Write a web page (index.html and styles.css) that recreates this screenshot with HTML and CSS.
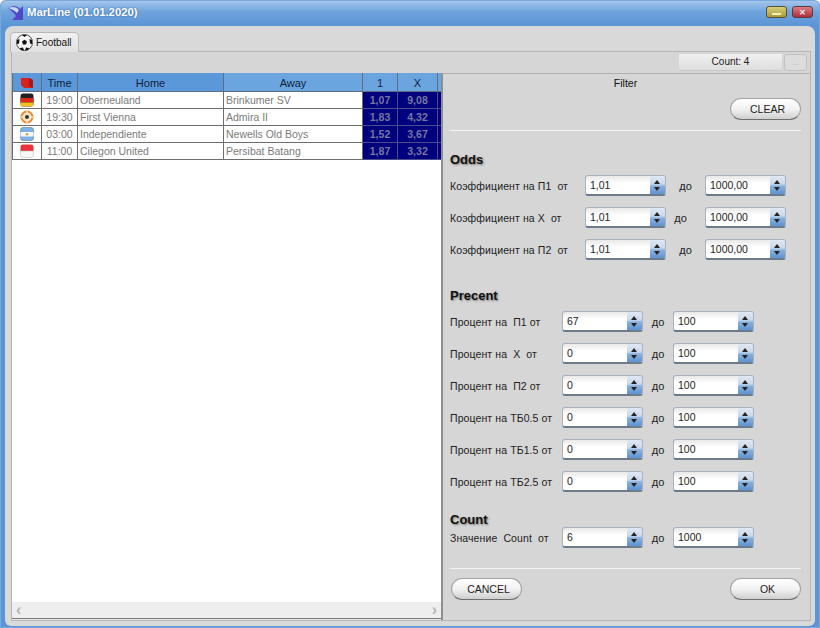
FILE: index.html
```html
<!DOCTYPE html>
<html lang="en">
<head>
    <meta charset="UTF-8">
    <title>MarLine (01.01.2020)</title>
    <link rel="stylesheet" href="styles.css">
</head>
<body>
<div class="window">
    <!-- Title bar -->
    <div class="titlebar">
        <svg class="app-icon" width="16" height="18" viewBox="0 0 16 18">
            <path d="M0 5 C5 2 10 3 12 6 L15 3 L15 17 L4 17 L8 13 C6 10 3 7 0 5 Z" fill="#4f46c8"/>
            <path d="M0 5 C5 3 9 4 11 7 L9 10 C7 8 4 6 0 5 Z" fill="#c4d8f6"/>
        </svg>
        <div class="app-title">MarLine (01.01.2020)</div>
        <div class="win-btn win-min"><span></span></div>
        <div class="win-btn win-close">✕</div>
    </div>

    <div class="client">
        <!-- Tabs -->
        <div class="tabs">
            <div class="tab">
                <svg width="17" height="17" viewBox="0 0 17 17">
                    <circle cx="8.5" cy="8.5" r="8" fill="#f4f4f4" stroke="#222" stroke-width="0.8"/>
                    <path d="M8.5 5.8 L11 7.6 L10 10.6 L7 10.6 L6 7.6 Z" fill="#111"/>
                    <path d="M6 1 L11 1 L8.5 3 Z M1 6 L3.5 5 L3 9.5 L1 10 Z M16 6 L13.5 5 L14 9.5 L16 10 Z M4 14 L7 13.5 L8 16.5 L5 16 Z M13 14 L10 13.5 L9 16.5 L12 16 Z" fill="#111"/>
                </svg>
                <span>Football</span>
            </div>
        </div>

        <div class="pane">
            <div class="toolbar">
                <div class="count-box">Count: 4</div>
                <div class="more-btn">...</div>
            </div>

            <div class="main">
                <!-- Match table -->
                <div class="table-wrap">
                    <table class="matches">
                        <colgroup>
                            <col class="col-flag"><col class="col-time"><col class="col-home"><col class="col-away"><col class="col-odd"><col class="col-oddx"><col class="col-cut">
                        </colgroup>
                        <tr>
                            <th><svg class="flag" width="14" height="12" viewBox="0 0 14 12"><path d="M1 1 L9 1 L13 3 L13 11 L4 11 L1 8 Z" fill="#d8201c"/><path d="M9 1 L13 3 L13 11 L9 9 Z" fill="#a81512"/></svg></th>
                            <th>Time</th><th>Home</th><th class="th-light">Away</th><th class="th-light">1</th><th class="th-light">X</th><th class="th-light"></th>
                        </tr>
                        <tr>
                            <td class="c"><svg class="flag" width="14" height="14" viewBox="0 0 14 14"><rect x="0.5" y="0.5" width="13" height="13" rx="2.5" fill="#222"/><rect x="0.5" y="5" width="13" height="4.5" fill="#d92b1c"/><path d="M0.5 9.5 H13.5 V11 A2.5 2.5 0 0 1 11 13.5 H3 A2.5 2.5 0 0 1 0.5 11 Z" fill="#f4c01e"/></svg></td>
                            <td class="c">19:00</td><td>Oberneuland</td><td>Brinkumer SV</td><td class="odd">1,07</td><td class="odd">9,08</td><td class="odd"></td>
                        </tr>
                        <tr>
                            <td class="c"><svg class="flag" width="14" height="14" viewBox="0 0 14 14"><circle cx="7" cy="7" r="5.5" fill="#fbe3c8" stroke="#ee8a2a" stroke-width="2"/><circle cx="7" cy="7" r="2" fill="#333"/><path d="M7 1 V3 M1 7 H3 M11 7 H13 M7 11 V13" stroke="#fff" stroke-width="1"/></svg></td>
                            <td class="c">19:30</td><td>First Vienna</td><td>Admira II</td><td class="odd">1,83</td><td class="odd">4,32</td><td class="odd"></td>
                        </tr>
                        <tr>
                            <td class="c"><svg class="flag" width="14" height="14" viewBox="0 0 14 14"><rect x="0.5" y="0.5" width="13" height="13" rx="2.5" fill="#7db0e4" stroke="#6a7f96" stroke-width="0.6"/><rect x="0.5" y="5" width="13" height="4.5" fill="#f4f6f8"/><circle cx="7" cy="7.2" r="1.2" fill="#c2a43c"/></svg></td>
                            <td class="c">03:00</td><td>Independiente</td><td>Newells Old Boys</td><td class="odd">1,52</td><td class="odd">3,67</td><td class="odd"></td>
                        </tr>
                        <tr>
                            <td class="c"><svg class="flag" width="14" height="14" viewBox="0 0 14 14"><path d="M0.5 7 V3 A2.5 2.5 0 0 1 3 0.5 H11 A2.5 2.5 0 0 1 13.5 3 V7 Z" fill="#e8323c"/><path d="M0.5 7 H13.5 V11 A2.5 2.5 0 0 1 11 13.5 H3 A2.5 2.5 0 0 1 0.5 11 Z" fill="#f6f6f6" stroke="#bbb" stroke-width="0.5"/></svg></td>
                            <td class="c">11:00</td><td>Cilegon United</td><td>Persibat Batang</td><td class="odd">1,87</td><td class="odd">3,32</td><td class="odd"></td>
                        </tr>
                    </table>
                    <div class="hscroll">
                        <span>‹</span>
                        <span>›</span>
                    </div>
                </div>

                <!-- Filter panel -->
                <div class="filter">
                    <div class="filter-title">Filter</div>
                    <div class="clear-line">
                        <div class="pill">CLEAR</div>
                    </div>
                    <div class="rule"></div>

                    <div class="heading h-odds">Odds</div>
                    <div class="form-rows rows-odds">
                        <div class="form-row">
                            <span class="lbl">Коэффициент на П1&nbsp; от</span>
                            <div class="spin"><span>1,01</span><i></i></div>
                            <span class="upto">до</span>
                            <div class="spin"><span>1000,00</span><i></i></div>
                        </div>
                        <div class="form-row">
                            <span class="lbl">Коэффициент на Х&nbsp; от</span>
                            <div class="spin"><span>1,01</span><i></i></div>
                            <span class="upto upto-x">до</span>
                            <div class="spin"><span>1000,00</span><i></i></div>
                        </div>
                        <div class="form-row">
                            <span class="lbl">Коэффициент на П2&nbsp; от</span>
                            <div class="spin"><span>1,01</span><i></i></div>
                            <span class="upto">до</span>
                            <div class="spin"><span>1000,00</span><i></i></div>
                        </div>
                    </div>

                    <div class="heading h-pct">Precent</div>
                    <div class="form-rows rows-pct">
                        <div class="form-row">
                            <span class="lbl">Процент на &nbsp;П1 от</span>
                            <div class="spin"><span>67</span><i></i></div>
                            <span class="upto">до</span>
                            <div class="spin"><span>100</span><i></i></div>
                        </div>
                        <div class="form-row">
                            <span class="lbl">Процент на &nbsp;Х &nbsp;от</span>
                            <div class="spin"><span>0</span><i></i></div>
                            <span class="upto">до</span>
                            <div class="spin"><span>100</span><i></i></div>
                        </div>
                        <div class="form-row">
                            <span class="lbl">Процент на &nbsp;П2 от</span>
                            <div class="spin"><span>0</span><i></i></div>
                            <span class="upto">до</span>
                            <div class="spin"><span>100</span><i></i></div>
                        </div>
                        <div class="form-row">
                            <span class="lbl">Процент на ТБ0.5 от</span>
                            <div class="spin"><span>0</span><i></i></div>
                            <span class="upto">до</span>
                            <div class="spin"><span>100</span><i></i></div>
                        </div>
                        <div class="form-row">
                            <span class="lbl">Процент на ТБ1.5 от</span>
                            <div class="spin"><span>0</span><i></i></div>
                            <span class="upto">до</span>
                            <div class="spin"><span>100</span><i></i></div>
                        </div>
                        <div class="form-row">
                            <span class="lbl">Процент на ТБ2.5 от</span>
                            <div class="spin"><span>0</span><i></i></div>
                            <span class="upto">до</span>
                            <div class="spin"><span>100</span><i></i></div>
                        </div>
                    </div>

                    <div class="heading h-count">Count</div>
                    <div class="form-rows rows-pct">
                        <div class="form-row">
                            <span class="lbl">Значение&nbsp; Count&nbsp; от</span>
                            <div class="spin"><span>6</span><i></i></div>
                            <span class="upto">до</span>
                            <div class="spin"><span>1000</span><i></i></div>
                        </div>
                    </div>

                    <div class="rule rule-bottom"></div>
                    <div class="actions">
                        <div class="pill">CANCEL</div>
                        <div class="pill">OK</div>
                    </div>
                </div>
            </div>
        </div>
    </div>
</div>
</body>
</html>
```

FILE: styles.css
```css
/* Window frame */
html, body {
    margin: 0;
    height: 100%;
    overflow: hidden;
}

body {
    font-family: "Liberation Sans", Arial, sans-serif;
    font-size: 11px;
    color: #222;
}

.window {
    width: 820px;
    height: 628px;
    box-sizing: border-box;
    display: flex;
    flex-direction: column;
    background: linear-gradient(180deg, #a9c9ec 0, #6ea3dd 12px, #5b95d6 26px, #5b95d6 100%);
    border-radius: 6px 6px 0 0;
    box-shadow: inset 0 0 0 1px #7aa8dc;
}

/* Title bar */
.titlebar {
    height: 26px;
    flex: none;
    display: flex;
    align-items: center;
    padding: 0 7px 2px 8px;
    box-sizing: border-box;
}

.app-icon {
    margin-right: 3px;
}

.app-title {
    flex: 1;
    color: #fff;
    font-size: 11.3px;
    font-weight: bold;
    text-shadow: 0 0 2px #2c5f9e;
}

.win-btn {
    width: 19px;
    height: 10px;
    margin-left: 5px;
    border-radius: 3px;
    border: 1px solid #56523c;
    display: flex;
    align-items: center;
    justify-content: center;
}

.win-min {
    background: linear-gradient(180deg, #d8cf7c, #a89a35);
}

.win-min span {
    width: 9px;
    height: 2px;
    margin-top: 4px;
    background: #f4eeb8;
}

.win-close {
    background: linear-gradient(180deg, #d97d86, #ad2f3b);
    border-color: #5d3a42;
    color: #fbe6e6;
    font-size: 8px;
    font-weight: bold;
}

/* Client area */
.client {
    flex: 1;
    margin: 0 5px 2px 5px;
    padding: 6px 4px 5px 5px;
    background: #d9d9d9;
    border-radius: 8px 8px 6px 6px;
    display: flex;
    flex-direction: column;
    min-height: 0;
}

.tabs {
    height: 19px;
    flex: none;
    display: flex;
}

.tab {
    width: 69px;
    box-sizing: border-box;
    height: 20px;
    background: linear-gradient(180deg, #f2f2f2, #e0e0e0);
    border: 1px solid #b9b9b9;
    border-bottom: none;
    border-radius: 5px 5px 0 0;
    display: flex;
    align-items: center;
    gap: 3px;
    padding-left: 5px;
    position: relative;
    z-index: 1;
    font-size: 10px;
    color: #111;
}

.pane {
    flex: 1;
    min-height: 0;
    margin-left: 1px;
    border: 1px solid #b5b5b5;
    box-shadow: inset 0 0 0 1px #e8e8e8;
    display: flex;
    flex-direction: column;
}

.toolbar {
    height: 21px;
    flex: none;
    padding-right: 3px;
    display: flex;
    justify-content: flex-end;
    align-items: center;
    gap: 2px;
    background: #d6d6d6;
}

.count-box {
    width: 103px;
    height: 16px;
    line-height: 16px;
    text-align: center;
    font-size: 10px;
    background: linear-gradient(180deg, #f0f0f0, #dedede);
    border: 0 solid #c8c8c8;
    border-bottom-width: 1px;
}

.more-btn {
    width: 21px;
    height: 15px;
    line-height: 15px;
    text-align: center;
    font-size: 7px;
    color: #aaa;
    background: #dcdcdc;
    border: 1px solid #c2c2c2;
    border-radius: 3px;
}

.main {
    flex: 1;
    min-height: 0;
    display: flex;
}

/* Match table */
.table-wrap {
    width: 429px;
    flex: none;
    display: flex;
    flex-direction: column;
    justify-content: space-between;
    background: #fff;
    border-bottom: 1px solid #7a7a7a;
    margin-bottom: 1px;
}

.matches {
    width: 429px;
    table-layout: fixed;
    border-collapse: collapse;
    font-size: 10.5px;
}

.col-flag { width: 29px; }
.col-time { width: 36px; }
.col-home { width: 146px; }
.col-away { width: 139px; }
.col-odd { width: 35px; }
.col-oddx { width: 40px; }
.col-cut { width: 4px; }

.matches th {
    height: 18px;
    padding: 2px 0 0;
    box-sizing: border-box;
    background: #5b98da;
    border: 1px solid #5f6f80;
    border-top: none;
    font-weight: normal;
    font-size: 11px;
    color: #10223a;
}

.matches .th-light {
    background: #6aa5e0;
}

.matches td {
    height: 16px;
    padding: 0 0 0 2px;
    border: 1px solid #6e6e6e;
    color: #7a7a7a;
    white-space: nowrap;
    overflow: hidden;
}

.matches td.c {
    padding: 0;
    text-align: center;
}

.matches td.odd {
    padding: 0;
    text-align: center;
    background: #00007f;
    border-color: #4c4c8c;
    color: #77779f;
    font-weight: bold;
}

.flag {
    display: block;
    margin: 0 auto;
}

.hscroll {
    height: 16px;
    flex: none;
    background: #eeeeee;
    display: flex;
    justify-content: space-between;
    align-items: center;
    padding: 0 4px;
    font-size: 16px;
    font-weight: bold;
    line-height: 14px;
    color: #b4b4b4;
}

/* Filter panel */
.filter {
    flex: 1;
    box-sizing: border-box;
    background: #d6d6d6;
    border-left: 2px solid #8e8e8e;
    border-top: 1px solid #b0b0b0;
    padding: 0 9px 0 7px;
    display: flex;
    flex-direction: column;
}

.filter-title {
    height: 18px;
    line-height: 18px;
    text-align: center;
    font-size: 10.5px;
    color: #111;
}

.clear-line {
    display: flex;
    justify-content: flex-end;
    padding-top: 6px;
}

.pill {
    width: 71px;
    height: 22px;
    line-height: 21px;
    padding-left: 4px;
    box-sizing: border-box;
    text-align: center;
    font-size: 10.5px;
    color: #222;
    border: 1px solid #a2a2a2;
    border-bottom-color: #6f6f6f;
    border-radius: 11px;
    background: linear-gradient(180deg, #ffffff 0, #f2f2f2 50%, #cfcfcf 100%);
}

.rule {
    height: 1px;
    margin-top: 10px;
    background: #f4f4f4;
}

.rule-bottom {
    margin-top: 20px;
}

.heading {
    height: 16px;
    line-height: 16px;
    font-size: 13px;
    font-weight: bold;
    color: #111;
    text-shadow: 1px 1px 2px #777;
}

.h-odds { margin-top: 21px; }
.h-pct { margin-top: 28px; }
.h-count { margin-top: 20px; height: 15px; }

.form-rows {
    display: flex;
    flex-direction: column;
    gap: 11px;
}

.rows-odds { margin-top: 7px; }
.h-pct + .rows-pct { margin-top: 7px; }

.form-row {
    display: grid;
    height: 21px;
    align-items: center;
}

.rows-odds .form-row {
    grid-template-columns: 135px 81px 39px 81px;
}

.rows-pct .form-row {
    grid-template-columns: 112px 81px 30px 81px;
}

.lbl {
    color: #222;
    font-size: 10.5px;
    letter-spacing: 0.1px;
    white-space: nowrap;
}

.upto {
    text-align: center;
    font-size: 11px;
    color: #222;
}

.upto-x {
    padding-right: 10px;
    box-sizing: border-box;
}

/* Spinner field */
.spin {
    height: 21px;
    box-sizing: border-box;
    display: flex;
    align-items: center;
    border-radius: 3px;
    border: 1px solid #aab2bc;
    border-bottom: 2px solid #6c7a8c;
    background: linear-gradient(180deg, #e8e8e8 0, #ffffff 40%, #ffffff 100%);
    overflow: hidden;
}

.spin span {
    flex: 1;
    padding-left: 4px;
    font-size: 10.5px;
    color: #222;
}

.spin i {
    position: relative;
    width: 15px;
    height: 100%;
    background: linear-gradient(180deg, #dfe9f5 0, #c6d8ee 45%, #8db2de 55%, #5f93d1 100%);
}

.spin i::before,
.spin i::after {
    content: "";
    position: absolute;
    left: 4px;
    border-left: 3.5px solid transparent;
    border-right: 3.5px solid transparent;
}

.spin i::before {
    top: 4px;
    border-bottom: 4px solid #222;
}

.spin i::after {
    bottom: 3px;
    border-top: 4px solid #222;
}

.actions {
    display: flex;
    justify-content: space-between;
    padding: 9px 0 0 1px;
}
```
